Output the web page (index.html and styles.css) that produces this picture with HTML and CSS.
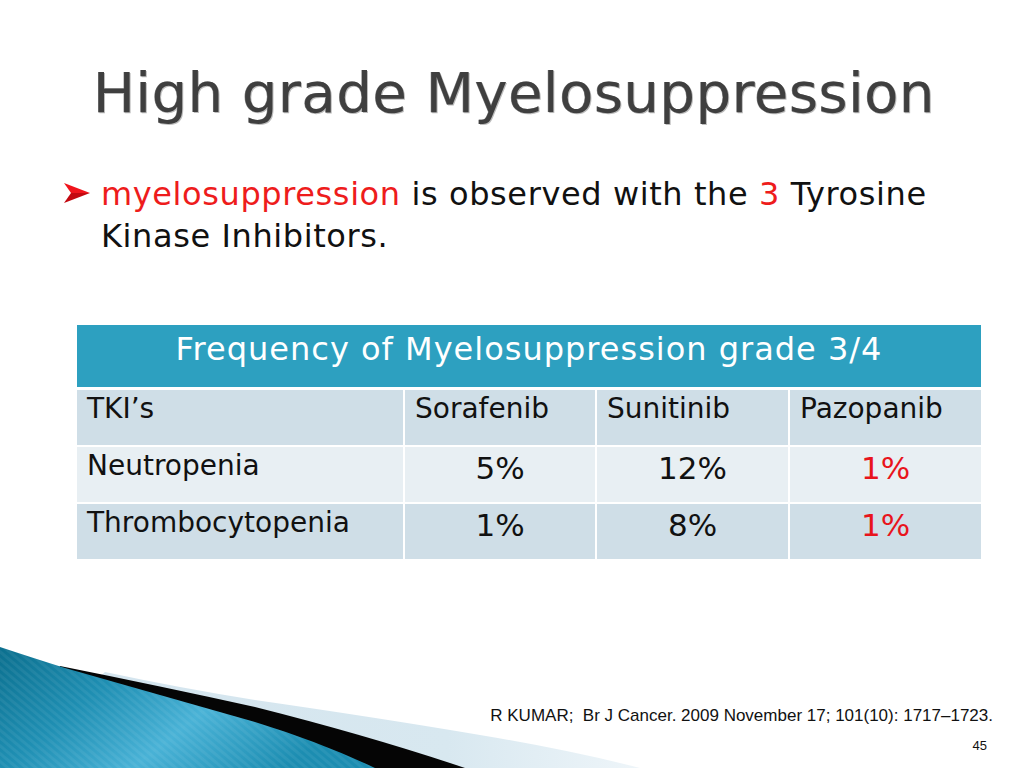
FILE: index.html
```html
<!DOCTYPE html>
<html lang="en">
<head>
<meta charset="utf-8">
<title>High grade Myelosuppression</title>
<link rel="stylesheet" href="styles.css">
</head>
<body>
<div class="slide">
  <svg class="deco" viewBox="0 0 1024 130" width="1024" height="130" aria-hidden="true">
    <defs>
      <linearGradient id="lb" x1="0" y1="0" x2="1" y2="0">
        <stop offset="0" stop-color="#d3e4ee"/>
        <stop offset="0.7" stop-color="#d8e8f0"/>
        <stop offset="1" stop-color="#eef5f9"/>
      </linearGradient>
      <linearGradient id="bl" x1="0" y1="0" x2="1" y2="0.4">
        <stop offset="0" stop-color="#0b6f8e"/>
        <stop offset="0.35" stop-color="#1f8fb3"/>
        <stop offset="0.65" stop-color="#49b2d6"/>
        <stop offset="1" stop-color="#1c8db1"/>
      </linearGradient>
      <pattern id="stripes" width="6" height="6" patternUnits="userSpaceOnUse" patternTransform="rotate(-50)">
        <rect width="3" height="6" fill="#ffffff" opacity="0.06"/>
      </pattern>
    </defs>
    <path d="M105 34 Q 180 50 255 62 Q 380 80 480 97 Q 570 112 640 130 L 0 130 Z" fill="url(#lb)"/>
    <path d="M60 28 Q 160 48 255 69 Q 370 98 465 130 L 0 130 Z" fill="#050505"/>
    <path d="M0 9 Q 30 19 65 30 Q 160 57 255 84 Q 320 104 375 130 L 0 130 Z" fill="url(#bl)"/>
    <path d="M0 9 Q 30 19 65 30 Q 160 57 255 84 Q 320 104 375 130 L 0 130 Z" fill="url(#stripes)"/>
  </svg>

  <h1 class="title">High grade Myelosuppression</h1>

  <div class="bullet">
    <svg class="arrow" viewBox="0 0 26 20" width="26" height="20" aria-hidden="true">
      <polygon points="0,0 26,10 7,10" fill="#f0141c"/>
      <polygon points="7,10 26,10 0,20" fill="#c30810"/>
    </svg>
    <p class="bullet-text"><span class="red">myelosuppression</span> is observed with the <span class="red">3</span> Tyrosine Kinase Inhibitors.</p>
  </div>

  <table class="freq">
    <colgroup>
      <col class="c1">
      <col class="c2">
      <col class="c3">
      <col class="c4">
    </colgroup>
    <thead>
      <tr class="head"><th colspan="4">Frequency of Myelosuppression grade 3/4</th></tr>
    </thead>
    <tbody>
      <tr class="odd">
        <td class="label">TKI’s</td>
        <td class="label">Sorafenib</td>
        <td class="label">Sunitinib</td>
        <td class="label">Pazopanib</td>
      </tr>
      <tr class="even">
        <td class="label">Neutropenia</td>
        <td class="val">5%</td>
        <td class="val">12%</td>
        <td class="val red">1%</td>
      </tr>
      <tr class="odd last">
        <td class="label">Thrombocytopenia</td>
        <td class="val">1%</td>
        <td class="val">8%</td>
        <td class="val red">1%</td>
      </tr>
    </tbody>
  </table>

  <div class="footer">
    <p class="cite">R KUMAR;&nbsp; Br J Cancer. 2009 November 17; 101(10): 1717–1723.</p>
    <p class="page">45</p>
  </div>
</div>
</body>
</html>
```

FILE: styles.css
```css
html, body {
  margin: 0;
  padding: 0;
  background: #ffffff;
}

.slide {
  position: relative;
  width: 1024px;
  height: 768px;
  overflow: hidden;
  background: #ffffff;
  font-family: "DejaVu Sans", "Open Sans", sans-serif;
  display: flex;
  flex-direction: column;
}

.deco {
  position: absolute;
  left: 0;
  bottom: 0;
  display: block;
}

.title {
  margin: 0;
  padding: 61px 0 0 93px;
  font-size: 56px;
  line-height: 64px;
  font-weight: normal;
  color: #3f3f3f;
  letter-spacing: 0.5px;
  text-shadow: 1px 1px 0 #bdbdbd, -0.5px -0.5px 0 #8a8a8a;
}

.bullet {
  display: flex;
  align-items: flex-start;
  margin-top: 48px;
  padding-left: 64px;
}

.arrow {
  flex: none;
  margin-top: 10px;
  margin-right: 11px;
}

.bullet-text {
  margin: 0;
  width: 880px;
  font-size: 32px;
  letter-spacing: 0.6px;
  line-height: 42px;
  color: #111111;
}

.red {
  color: #ee1c1c;
}

.freq {
  position: relative;
  margin: 68px 0 0 77px;
  width: 904px;
  border-collapse: separate;
  border-spacing: 0;
  table-layout: fixed;
}

.c1 { width: 326px; }
.c2 { width: 192px; }
.c3 { width: 193px; }
.c4 { width: 193px; }

.freq th {
  background: #2da0c0;
  color: #ffffff;
  font-weight: normal;
  font-size: 32px;
  letter-spacing: 1px;
  line-height: 40px;
  padding: 4px 0 0;
  vertical-align: top;
  text-align: center;
  border-bottom: 3px solid #ffffff;
}

.head { height: 65px; }
.odd, .even { height: 57px; }
.last { height: 55px; }

.freq td {
  padding: 0;
  border-bottom: 2px solid #ffffff;
  border-left: 2px solid #ffffff;
  vertical-align: top;
  color: #111111;
}

.freq td:first-child { border-left: 0; }
.freq .last td { border-bottom: 0; }

.odd td { background: #cfdee7; }
.even td { background: #e8eff3; }

.freq .label {
  font-size: 28px;
  line-height: 34px;
  padding: 2px 10px 0;
  white-space: nowrap;
}

.freq .val {
  font-size: 31px;
  line-height: 40px;
  padding-top: 1px;
  text-align: center;
}

.freq .val.red { color: #e8141c; }

.footer {
  position: relative;
  margin-top: auto;
  padding: 0 31px 14px 0;
  font-family: "Liberation Sans", Arial, sans-serif;
  text-align: right;
}

.cite {
  margin: 0 0 12px;
  font-size: 17px;
  line-height: 20px;
  color: #111111;
}

.page {
  margin: 0;
  padding-right: 6px;
  font-size: 13px;
  line-height: 16px;
  color: #111111;
}
```
